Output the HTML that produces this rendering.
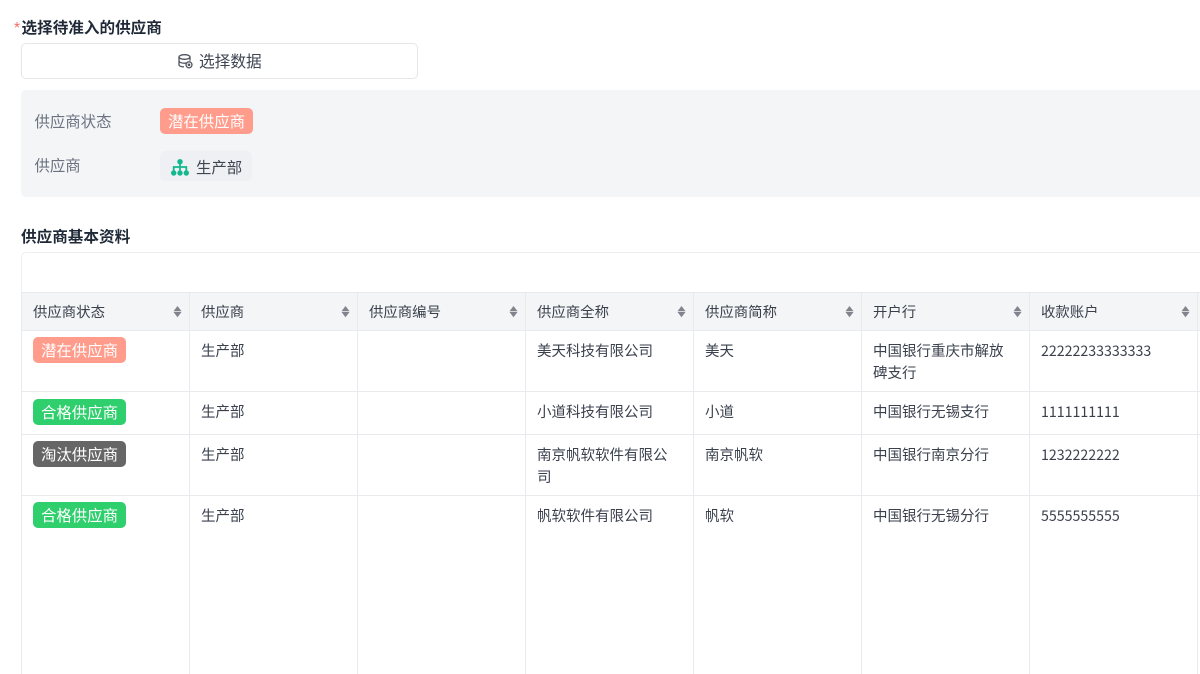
<!DOCTYPE html>
<html lang="zh"><head><meta charset="utf-8"><style>
html,body{margin:0;padding:0;background:#fff;width:1200px;height:674px;overflow:hidden}
body{position:relative;font-family:"Liberation Sans","Noto Sans CJK SC",sans-serif;color:#3f4652;filter:blur(.3px)}
.a{position:absolute;white-space:nowrap}
.t{font-size:14.5px;line-height:22px;color:#3a414d}
.n{font-family:"Noto Sans CJK SC",sans-serif;font-size:14.2px;margin-top:-1px}
.th{font-size:14.4px;line-height:22px;color:#3a414d;top:302px}
.tag{position:absolute;width:93px;height:26px;border-radius:5px;color:#fff;font-size:15.4px;line-height:29px;text-align:center;white-space:nowrap}
.r{background:#ff9c8c}.g{background:#2fcf6d}.k{background:#666}
.v{position:absolute;width:1px;top:292px;height:382px;background:#e9eaed}
.h{position:absolute;left:21px;width:1179px;height:1px;background:#e9eaed}
.s{position:absolute;top:305px;width:9px;height:13px}
</style></head><body>
<div class="a" style="left:14px;top:19px;font-size:15.5px;line-height:20px;color:#f56c6c">*</div>
<div class="a" style="left:21.5px;top:18px;font-size:15.6px;line-height:22px;font-weight:700;color:#1f2937">选择待准入的供应商</div>
<div class="a" style="left:21px;top:43px;width:395px;height:34px;border:1px solid #e4e6ea;border-radius:5px;background:#fff"></div>
<svg class="a" style="left:178px;top:54px" width="15" height="15" viewBox="0 0 15 15" fill="none" stroke="#4d535e" stroke-width="1.3"><ellipse cx="6.500" cy="3" rx="5.500" ry="2.300"/><path d="M1 3v7.800c0 1.200 2.200 2.100 5 2.100M1 7c0 1.200 2.400 2.200 5.500 2.200 1 0 2-.1 2.800-.4M12 3v3.800"/><circle cx="11" cy="10.800" r="3"/><circle cx="11" cy="10.800" r=".7"/></svg>
<div class="a" style="left:199px;top:51.500px;font-size:15.7px;line-height:22px;color:#3f4652">选择数据</div>
<div class="a" style="left:21px;top:90px;width:1179px;height:107px;background:#f4f5f7;border-radius:5px 0 0 5px"></div>
<div class="a" style="left:34.500px;top:112px;font-size:15.4px;line-height:22px;color:#6b7280">供应商状态</div>
<div class="tag r" style="left:160px;top:108px">潜在供应商</div>
<div class="a" style="left:34.500px;top:156px;font-size:15.4px;line-height:22px;color:#6b7280">供应商</div>
<div class="a" style="left:160px;top:151px;width:92px;height:30px;background:#eff0f3;border-radius:5px"></div>
<svg class="a" style="left:171px;top:159px" width="18" height="17" viewBox="0 0 18 17" fill="#14b88f"><circle cx="9" cy="2.700" r="2.700"/><circle cx="2.700" cy="14" r="2.700"/><circle cx="9" cy="14" r="2.700"/><circle cx="15.300" cy="14" r="2.700"/><path d="M8.100 3h1.800v4.100h6.300V13h-1.800V8.900H9.900V13H8.100V8.900H3.600V13H1.800V7.100h6.300z"/></svg>
<div class="a" style="left:196px;top:158px;font-size:15.4px;line-height:22px;color:#3f4652">生产部</div>
<div class="a" style="left:21px;top:227px;font-size:15.6px;line-height:22px;font-weight:700;color:#1f2937">供应商基本资料</div>

<div class="a" style="left:21px;top:252px;width:1179px;height:422px;border:1px solid #eceef0;border-right:0;border-bottom:0;border-radius:5px 0 0 0;box-sizing:border-box"></div>
<div class="a" style="left:21px;top:292px;width:1179px;height:39px;background:#f4f5f7"></div>
<div class="h" style="top:292px"></div><div class="h" style="top:330px"></div><div class="h" style="top:391px"></div><div class="h" style="top:433.500px"></div><div class="h" style="top:495px"></div>
<div class="v" style="left:21px"></div><div class="v" style="left:189px"></div><div class="v" style="left:357px"></div><div class="v" style="left:525px"></div><div class="v" style="left:693px"></div><div class="v" style="left:861px"></div><div class="v" style="left:1029px"></div><div class="v" style="left:1197px"></div>

<div class="a th" style="left:33px">供应商状态</div>
<div class="a th" style="left:201px">供应商</div>
<div class="a th" style="left:369px">供应商编号</div>
<div class="a th" style="left:537px">供应商全称</div>
<div class="a th" style="left:705px">供应商简称</div>
<div class="a th" style="left:873px">开户行</div>
<div class="a th" style="left:1041px">收款账户</div>

<svg class="s" style="left:172.500px" viewBox="0 0 9 13" fill="#7f848d"><path d="M4.500 1 8.500 6.200H.5zM4.500 12.200.5 7h8z"/></svg>
<svg class="s" style="left:340.500px" viewBox="0 0 9 13" fill="#7f848d"><path d="M4.500 1 8.500 6.200H.5zM4.500 12.200.5 7h8z"/></svg>
<svg class="s" style="left:508.500px" viewBox="0 0 9 13" fill="#7f848d"><path d="M4.500 1 8.500 6.200H.5zM4.500 12.200.5 7h8z"/></svg>
<svg class="s" style="left:676.500px" viewBox="0 0 9 13" fill="#7f848d"><path d="M4.500 1 8.500 6.200H.5zM4.500 12.200.5 7h8z"/></svg>
<svg class="s" style="left:844.500px" viewBox="0 0 9 13" fill="#7f848d"><path d="M4.500 1 8.500 6.200H.5zM4.500 12.200.5 7h8z"/></svg>
<svg class="s" style="left:1012.500px" viewBox="0 0 9 13" fill="#7f848d"><path d="M4.500 1 8.500 6.200H.5zM4.500 12.200.5 7h8z"/></svg>
<svg class="s" style="left:1180.500px" viewBox="0 0 9 13" fill="#7f848d"><path d="M4.500 1 8.500 6.200H.5zM4.500 12.200.5 7h8z"/></svg>

<div class="tag r" style="left:33px;top:337px">潜在供应商</div>
<div class="a t" style="left:201px;top:341px">生产部</div>
<div class="a t" style="left:537px;top:341px">美天科技有限公司</div>
<div class="a t" style="left:705px;top:341px">美天</div>
<div class="a t" style="left:873px;top:341px">中国银行重庆市解放<br>碑支行</div>
<div class="a t n" style="left:1041px;top:341px">22222233333333</div>

<div class="tag g" style="left:33px;top:399px">合格供应商</div>
<div class="a t" style="left:201px;top:402px">生产部</div>
<div class="a t" style="left:537px;top:402px">小道科技有限公司</div>
<div class="a t" style="left:705px;top:402px">小道</div>
<div class="a t" style="left:873px;top:402px">中国银行无锡支行</div>
<div class="a t n" style="left:1041px;top:402px">1111111111</div>

<div class="tag k" style="left:33px;top:441px">淘汰供应商</div>
<div class="a t" style="left:201px;top:445px">生产部</div>
<div class="a t" style="left:537px;top:445px">南京帆软软件有限公<br>司</div>
<div class="a t" style="left:705px;top:445px">南京帆软</div>
<div class="a t" style="left:873px;top:445px">中国银行南京分行</div>
<div class="a t n" style="left:1041px;top:445px">1232222222</div>

<div class="tag g" style="left:33px;top:502px">合格供应商</div>
<div class="a t" style="left:201px;top:505.500px">生产部</div>
<div class="a t" style="left:537px;top:505.500px">帆软软件有限公司</div>
<div class="a t" style="left:705px;top:505.500px">帆软</div>
<div class="a t" style="left:873px;top:505.500px">中国银行无锡分行</div>
<div class="a t n" style="left:1041px;top:505.500px">5555555555</div>
</body></html>
